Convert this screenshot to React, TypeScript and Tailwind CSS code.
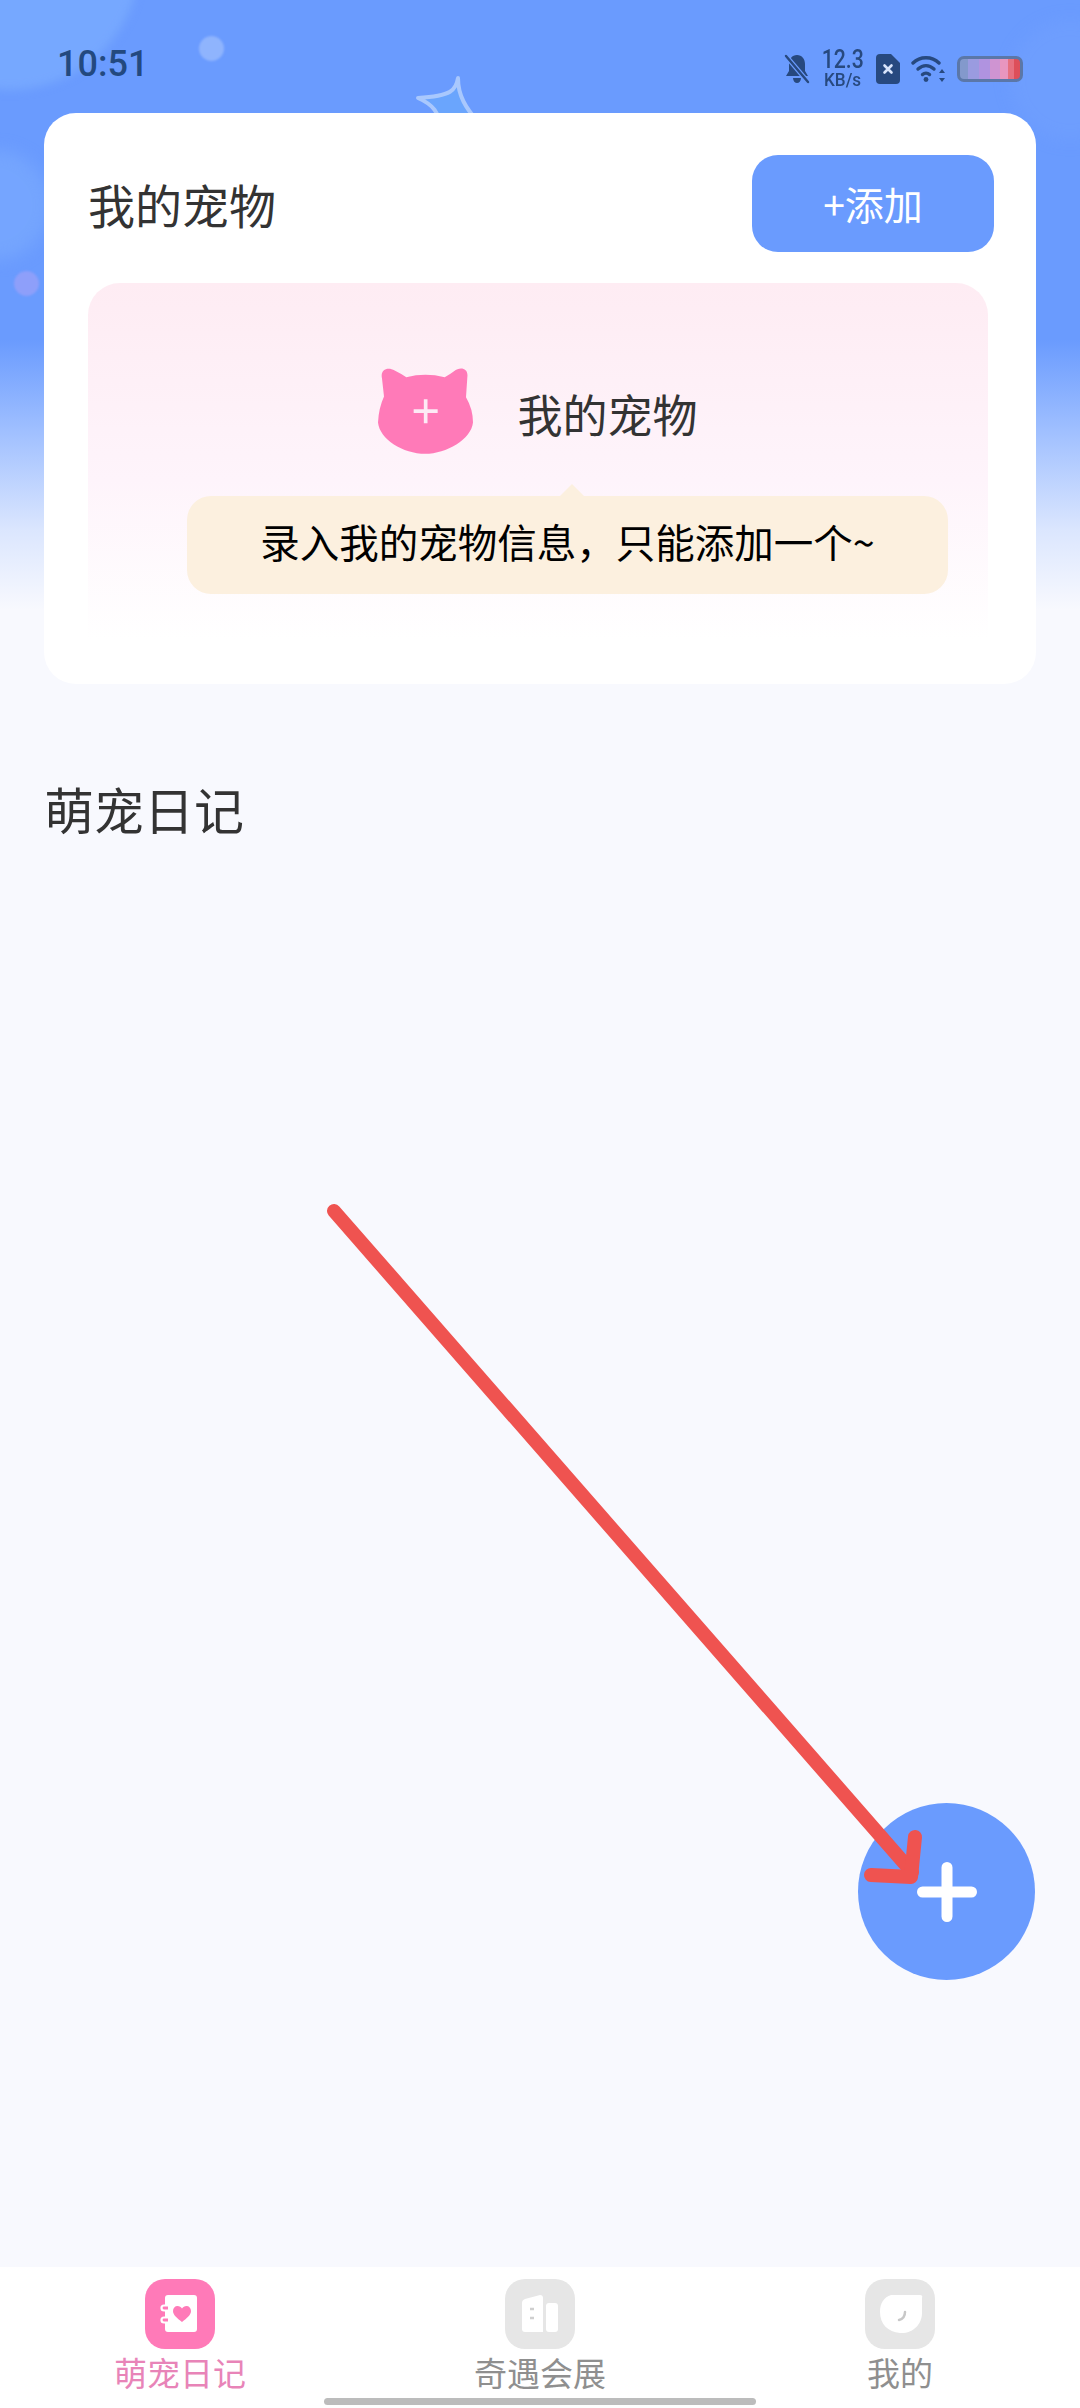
const cjk = "font-['Noto_Sans_CJK_SC','Noto_Sans',sans-serif]";

function BellOff() {
  return (
    <svg width="28" height="32" viewBox="0 0 28 32" className="text-[#27497f]">
      <path d="M14 2c5 0 8 4 8 9v7l3 5H3l3-5v-7c0-5 3-9 8-9z" fill="currentColor" />
      <path d="M10 25h8c0 3-2 5-4 5s-4-2-4-5z" fill="currentColor" />
      <path d="M3 3l22 26" stroke="#6a9bfe" strokeWidth="5" />
      <path d="M3 3l22 26" stroke="currentColor" strokeWidth="2.4" strokeLinecap="round" />
    </svg>
  );
}

function Sim() {
  return (
    <svg width="24" height="30" viewBox="0 0 24 30">
      <path d="M4 0h11l9 9v17a4 4 0 0 1-4 4H4a4 4 0 0 1-4-4V4a4 4 0 0 1 4-4z" fill="#27497f" />
      <path d="M8.5 11.5l7 7M15.5 11.5l-7 7" stroke="#d8e4fb" strokeWidth="2.6" strokeLinecap="round" />
    </svg>
  );
}

function Wifi() {
  return (
    <svg width="34" height="28" viewBox="0 0 34 28" fill="none" stroke="#27497f" strokeLinecap="round">
      <path d="M2 8c7-7 19-7 26 0" strokeWidth="3.4" />
      <path d="M7 14c5-4.500 11-4.500 16 0" strokeWidth="3.400" />
      <path d="M11.500 19.500c2-1.800 5-1.800 7 0" strokeWidth="3.400" />
      <circle cx="15" cy="24.500" r="2.400" fill="#27497f" stroke="none" />
      <path d="M31 14l-3 4h6zM31 27l-3-4h6z" fill="#27497f" stroke="none" />
    </svg>
  );
}

function Battery() {
  return (
    <div className="h-[26px] w-[66px] rounded-[7px] border-[3px] border-[#5b77a8] bg-[linear-gradient(90deg,#8399cc_0%,#8399cc_14%,#9a9be0_14%,#9a9be0_32%,#b093e0_32%,#b093e0_50%,#cf94d2_50%,#cf94d2_66%,#e896bf_66%,#e896bf_80%,#e6707f_80%,#e6707f_90%,#dd4f5a_90%,#dd4f5a_100%)]" />
  );
}

function Cat() {
  return (
    <svg width="95" height="86" viewBox="120 85 285 257">
      <path
        d="M132 116C126 90 148 80 170 92Q190 102 205 112Q262 98 320 112Q335 104 348 94C366 80 392 84 388 112L384 172Q405 208 405 248C400 298 325 342 262 342C195 342 125 298 120 248Q122 205 138 170Z"
        fill="#ff7ab8"
      />
      <path d="M227 214H299M263 178V250" stroke="#fdeaf5" strokeWidth="11" />
    </svg>
  );
}

function DiaryIcon() {
  return (
    <svg width="70" height="70" viewBox="0 0 70 70">
      <rect width="70" height="70" rx="20" fill="#ff7ab8" />
      <rect x="20" y="16" width="32" height="37" rx="3" fill="#fff" />
      <path d="M37 43c-5-4-9-7-9-11 0-3 2-5 4.500-5 2 0 3.500 1 4.500 2.500 1-1.500 2.500-2.500 4.500-2.500 2.500 0 4.500 2 4.500 5 0 4-4 7-9 11z" fill="#ff7ab8" />
      <path d="M23 26.500h-4a2.500 2.500 0 0 0 0 5h4M23 38.500h-4a2.500 2.500 0 0 0 0 5h4" stroke="#fff" strokeWidth="2.200" fill="#ff7ab8" />
    </svg>
  );
}

function MeetIcon() {
  return (
    <svg width="70" height="70" viewBox="0 0 70 70">
      <rect width="70" height="70" rx="20" fill="#e6e6e6" />
      <path d="M17 24q0-3 3-4l15-4q3 0 3 3v34H20q-3 0-3-3z" fill="#fff" />
      <rect x="41" y="24" width="12" height="29" rx="3" fill="#fff" />
      <path d="M25 30h4M25 39h4" stroke="#cfcfcf" strokeWidth="2.500" />
    </svg>
  );
}

function MineIcon() {
  return (
    <svg width="70" height="70" viewBox="0 0 70 70">
      <rect width="70" height="70" rx="20" fill="#e6e6e6" />
      <path d="M26 16H55Q58 16 57 19V34C57 46 47 55 35 54C23 53 15 45 15 33C15 24 19 18 26 16Z" fill="#fff" />
      <path d="M40 33c0 5-2 7-6 8" stroke="#c8c8c8" strokeWidth="2.500" fill="none" strokeLinecap="round" />
    </svg>
  );
}

function NavItem({ icon, label, color }: { icon: React.ReactNode; label: string; color: string }) {
  return (
    <div className="flex flex-col items-center">
      {icon}
      <span className={`mt-[1px] text-[33px] leading-[44px] ${color}`}>{label}</span>
    </div>
  );
}

export default function App() {
  return (
    <div className={`relative flex h-[2408px] w-[1080px] flex-col overflow-hidden bg-[linear-gradient(180deg,#6a9bfe_0px,#6a9bfe_340px,#9fbfff_430px,#dbe6fe_530px,#f8f9fe_610px,#f8f9fe_100%)] ${cjk}`}>
      {/* background decoration */}
      <div className="absolute left-[-120px] top-[-170px] h-[260px] w-[260px] rounded-full bg-[#7fb0ff]/60 blur-[5px]" />
      <div className="absolute left-[-60px] top-[150px] h-[110px] w-[110px] rounded-full bg-[#7fb0ff]/50 blur-[8px]" />
      <div className="absolute left-[199px] top-[36px] h-[25px] w-[25px] rounded-full bg-[#8fb4fd] blur-[1px]" />
      <div className="absolute left-[14px] top-[271px] h-[25px] w-[25px] rounded-full bg-[#8e9ffa] blur-[1px]" />
      <div className="absolute right-[-50px] top-[20px] h-[120px] w-[120px] rounded-full bg-[#7aa8fe]/25 blur-[8px]" />
      <svg className="absolute left-[412px] top-[72px]" width="70" height="50" viewBox="0 0 70 50">
        <path d="M46 6C44 18 40 24 6 26C20 32 28 40 30 60L66 50C54 36 46 24 46 6Z" fill="#6aa5fd" stroke="#a9c8fd" strokeWidth="4" strokeLinejoin="round" />
      </svg>

      {/* status bar */}
      <div className="relative flex h-[113px] shrink-0 items-start justify-between pl-[57px] pr-[57px] pt-[44px]">
        <span className="font-['Roboto',sans-serif] text-[36px] font-medium leading-[40px] text-[#23497f]">10:51</span>
        <div className="flex items-center pt-[4px]">
          <BellOff />
          <div className="ml-[10px] flex w-[44px] flex-col items-center font-['Roboto',sans-serif] font-medium text-[#27497f]">
            <span className="scale-x-[0.85] text-[25px] leading-[23px]">12.3</span>
            <span className="scale-x-[0.9] text-[19px] leading-[18px]">KB/s</span>
          </div>
          <div className="ml-[11px]"><Sim /></div>
          <div className="ml-[11px]"><Wifi /></div>
          <div className="ml-[12px]"><Battery /></div>
        </div>
      </div>

      {/* content */}
      <div className="relative flex-1 px-[44px]">
        <div className="rounded-[32px] bg-white pb-[44px] pt-[42px]">
          <div className="flex items-center justify-between pl-[44px] pr-[42px]">
            <span className="text-[47px] leading-[60px] text-[#333333]">我的宠物</span>
            <div className="flex h-[97px] w-[242px] items-center justify-center rounded-[26px] bg-[#6a9bfe] text-[39px] text-white">+添加</div>
          </div>
          <div className="ml-[44px] mr-[48px] mt-[31px] rounded-t-[32px] bg-[linear-gradient(180deg,#feecf3_0%,#fef4fb_55%,#ffffff_100%)] pb-[46px] pt-[85px]">
            <div className="flex items-center justify-center gap-[44px]">
              <Cat />
              <span className="mt-[6px] text-[45px] leading-[60px] text-[#333333]">我的宠物</span>
            </div>
            <div className="relative ml-[99px] mr-[40px] mt-[42px] flex h-[98px] items-center justify-center rounded-[24px] bg-[#fcf0df] pb-[8px] text-[39.5px] text-black">
              <span className="absolute left-[373px] top-[-12px] h-0 w-0 border-x-[12px] border-b-[12px] border-x-transparent border-b-[#fcf0df]" />
              录入我的宠物信息，只能添加一个~
            </div>
          </div>
        </div>
        <div className="mt-[94px] text-[50px] leading-[60px] text-[#333333]">萌宠日记</div>
      </div>

      {/* bottom navigation */}
      <div className="grid h-[141px] shrink-0 grid-cols-3 bg-white pt-[12px]">
        <NavItem icon={<DiaryIcon />} label="萌宠日记" color="text-[#e884b8]" />
        <NavItem icon={<MeetIcon />} label="奇遇会展" color="text-[#8f8f8f]" />
        <NavItem icon={<MineIcon />} label="我的" color="text-[#8f8f8f]" />
      </div>
      <div className="absolute bottom-[3px] left-[324px] h-[7px] w-[432px] rounded-full bg-[#bcbcbc]" />

      {/* floating action button */}
      <div className="absolute left-[858px] top-[1803px] flex h-[177px] w-[177px] items-center justify-center rounded-full bg-[#6a9bfe]">
        <svg width="60" height="60" viewBox="0 0 60 60">
          <path d="M5.500 30H54.500M30 5.500V54.500" stroke="#fff" strokeWidth="11" strokeLinecap="round" />
        </svg>
      </div>

      {/* annotation arrow */}
      <svg className="absolute left-[320px] top-[1195px]" width="620" height="700" viewBox="320 1195 620 700" fill="none">
        <path d="M334 1211L912 1872" stroke="#ef5350" strokeWidth="14" strokeLinecap="round" />
        <path d="M915 1837L911 1877L871 1875" stroke="#ef5350" strokeWidth="14" strokeLinecap="round" strokeLinejoin="round" />
      </svg>
    </div>
  );
}
